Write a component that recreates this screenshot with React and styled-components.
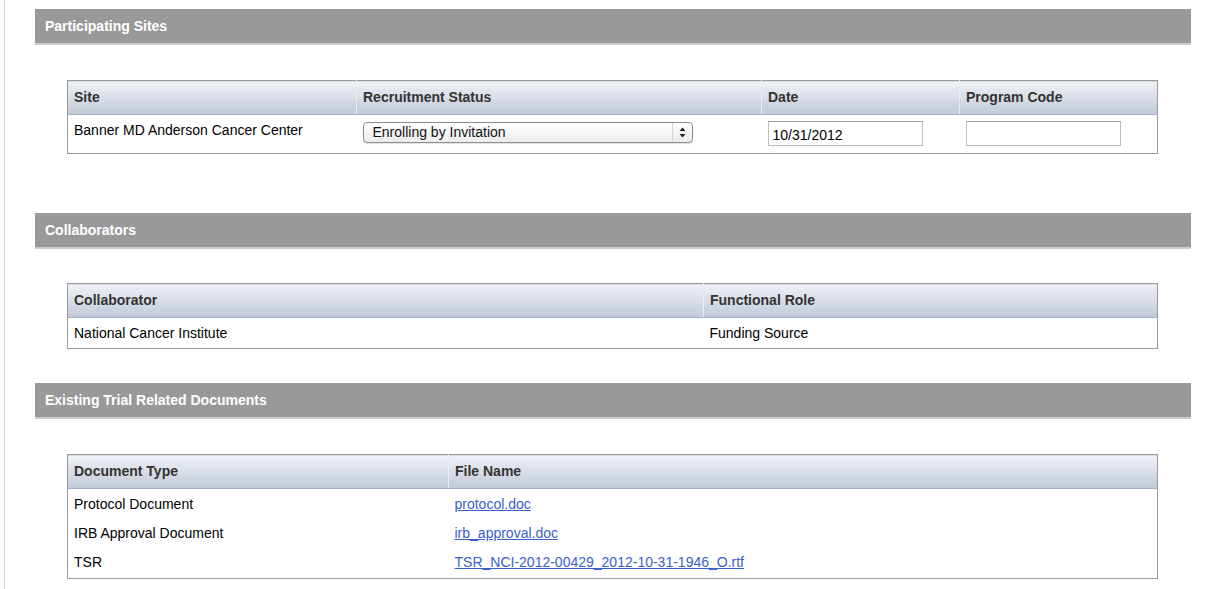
import React from "react";
import styled, { createGlobalStyle } from "styled-components";

const GlobalStyle = createGlobalStyle`
	body {
		margin: 0;
		background: #ffffff;
		font-family: "Liberation Sans", Arial, sans-serif;
		font-size: 14px;
		color: #000000;
	}
`;

const Page = styled.div`
	margin-left: 4px;
	border-left: 1px solid #d4d4d4;
	padding: 9px 25px 0 30px;
	min-height: 100vh;
	box-sizing: border-box;
`;

const Section = styled.section`
	margin-bottom: ${(props) => props.gap ?? 34}px;
`;

const SectionBar = styled.h2`
	margin: 0;
	height: 34px;
	line-height: 35px;
	padding-left: 10px;
	background: #999999;
	border-bottom: 2px solid #cccccc;
	color: #ffffff;
	font-size: 14px;
	font-weight: bold;
`;

const Table = styled.table`
	margin: ${(props) => props.top || 34}px 33px 0 32px;
	width: calc(100% - 65px);
	border: 1px solid #999999;
	border-collapse: collapse;
	table-layout: fixed;
`;

const HeadCell = styled.th`
	text-align: left;
	font-weight: bold;
	color: #333333;
	padding: 8px 6px;
	line-height: 17px;
	background: linear-gradient(#eff1f6, #c1c9d8);
	border-bottom: 1px solid #a2b0ca;
	border-left: 1px solid #e9ecf2;
	&:first-child {
		border-left: none;
	}
`;

const Cell = styled.td`
	padding: ${(props) => props.pad || "7px 6px 6px"};
	line-height: 17px;
	vertical-align: top;
`;

const InputCell = styled.td`
	padding: 6px 6px 7px;
	vertical-align: top;
`;

const SelectBox = styled.div`
	display: flex;
	align-items: center;
	width: 330px;
	height: 21px;
	box-sizing: border-box;
	border: 1px solid #8e8e8e;
	border-radius: 4px;
	background: linear-gradient(#ffffff, #ececec);
	box-shadow: 0 1px 1px rgba(0, 0, 0, 0.12);
	margin-top: 1px;
`;

const SelectText = styled.span`
	flex: 1;
	padding-left: 9px;
	font-size: 14px;
	line-height: 19px;
	color: #111111;
`;

const SelectArrows = styled.span`
	width: 19px;
	height: 19px;
	border-left: 1px solid #d6d6d6;
	display: flex;
	align-items: center;
	justify-content: center;
`;

const TextInput = styled.input`
	display: block;
	width: 155px;
	height: 25px;
	box-sizing: border-box;
	border: 1px solid #bdbdbd;
	border-top-color: #9a9a9a;
	padding: 2px 4px 0;
	font-family: "Liberation Sans", Arial, sans-serif;
	font-size: 14px;
	color: #000000;
	background: #ffffff;
	outline: none;
`;

const Link = styled.a`
	color: #3a5fc8;
	text-decoration: underline;
`;

const documents = [
	{ type: "Protocol Document", file: "protocol.doc" },
	{ type: "IRB Approval Document", file: "irb_approval.doc" },
	{ type: "TSR", file: "TSR_NCI-2012-00429_2012-10-31-1946_O.rtf" },
];

export default function App() {
	return (
		<>
			<GlobalStyle />
			<Page>
				<Section gap={59}>
					<SectionBar>Participating Sites</SectionBar>
					<Table top={35}>
						<colgroup>
							<col style={{ width: 289 }} />
							<col style={{ width: 405 }} />
							<col style={{ width: 198 }} />
							<col />
						</colgroup>
						<thead>
							<tr>
								<HeadCell>Site</HeadCell>
								<HeadCell>Recruitment Status</HeadCell>
								<HeadCell>Date</HeadCell>
								<HeadCell>Program Code</HeadCell>
							</tr>
						</thead>
						<tbody>
							<tr>
								<Cell pad="7px 6px">Banner MD Anderson Cancer Center</Cell>
								<InputCell>
									<SelectBox>
										<SelectText>Enrolling by Invitation</SelectText>
										<SelectArrows>
											<svg width="7" height="11" viewBox="0 0 7 11">
												<path d="M3.5 0.5 L6.5 4 L0.5 4 Z" fill="#222" />
												<path d="M3.5 10.5 L6.5 7 L0.5 7 Z" fill="#222" />
											</svg>
										</SelectArrows>
									</SelectBox>
								</InputCell>
								<InputCell>
									<TextInput defaultValue="10/31/2012" />
								</InputCell>
								<InputCell>
									<TextInput defaultValue="" />
								</InputCell>
							</tr>
						</tbody>
					</Table>
				</Section>

				<Section>
					<SectionBar>Collaborators</SectionBar>
					<Table>
						<colgroup>
							<col style={{ width: 636 }} />
							<col />
						</colgroup>
						<thead>
							<tr>
								<HeadCell>Collaborator</HeadCell>
								<HeadCell>Functional Role</HeadCell>
							</tr>
						</thead>
						<tbody>
							<tr>
								<Cell>National Cancer Institute</Cell>
								<Cell>Funding Source</Cell>
							</tr>
						</tbody>
					</Table>
				</Section>

				<Section gap={0}>
					<SectionBar>Existing Trial Related Documents</SectionBar>
					<Table top={35}>
						<colgroup>
							<col style={{ width: 381 }} />
							<col />
						</colgroup>
						<thead>
							<tr>
								<HeadCell>Document Type</HeadCell>
								<HeadCell>File Name</HeadCell>
							</tr>
						</thead>
						<tbody>
							{documents.map((doc, i) => {
								const pad = i === documents.length - 1 ? "7px 6px 7px" : "7px 6px 5px";
								return (
									<tr key={doc.file}>
										<Cell pad={pad}>{doc.type}</Cell>
										<Cell pad={pad}>
											<Link href="#">{doc.file}</Link>
										</Cell>
									</tr>
								);
							})}
						</tbody>
					</Table>
				</Section>
			</Page>
		</>
	);
}
